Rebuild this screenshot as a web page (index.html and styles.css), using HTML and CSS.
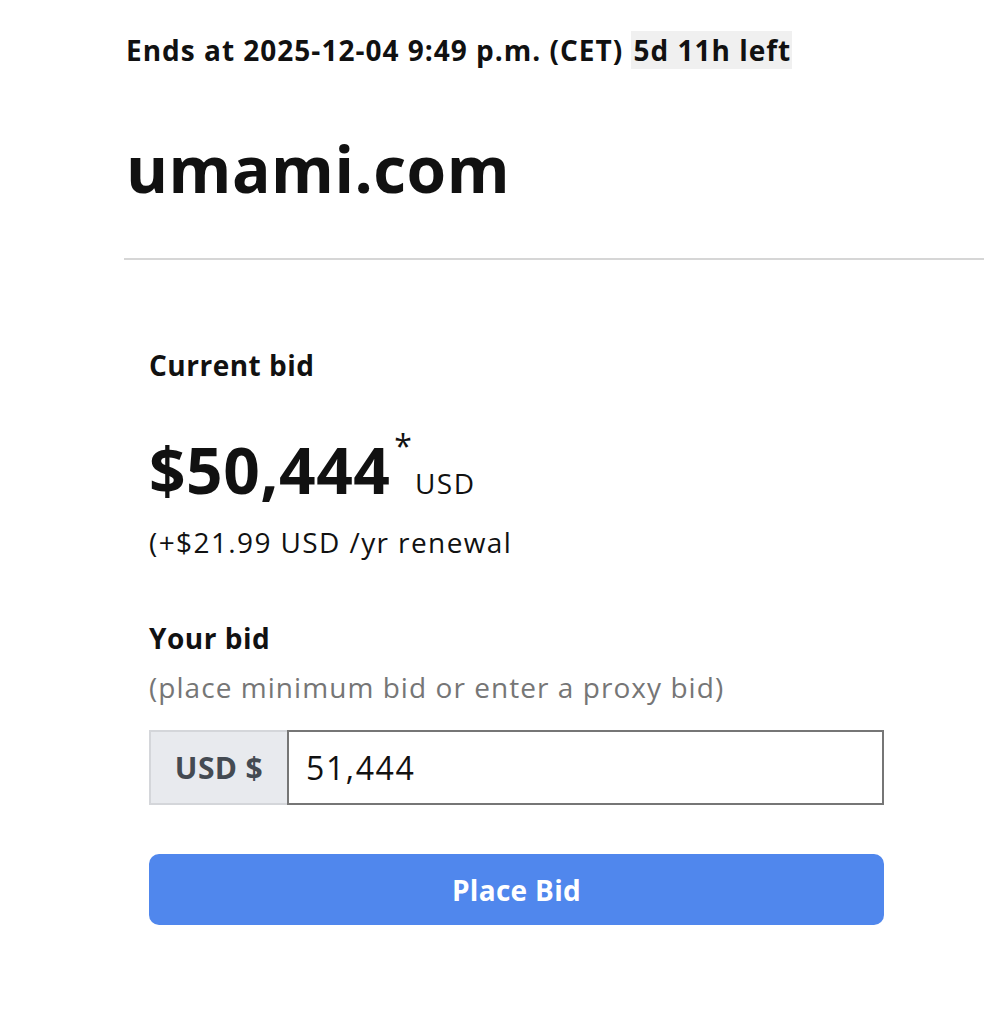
FILE: index.html
```html
<!DOCTYPE html>
<html lang="en">
<head>
<meta charset="utf-8">
<link rel="stylesheet" href="styles.css">
<title>umami.com auction</title>
</head>
<body>
<main class="page">
  <header class="head">
    <p class="ends">Ends at 2025-12-04 9:49 p.m. (CET) <span class="left">5d 11h left</span></p>
    <h1 class="domain">umami.com</h1>
  </header>
  <section class="bid-panel">
    <h2 class="label">Current bid</h2>
    <div class="price"><span class="amount">$50,444</span><sup class="star">*</sup><span class="cur">USD</span></div>
    <p class="renewal">(+$21.99 USD /yr renewal</p>
    <h2 class="label your">Your bid</h2>
    <p class="hint">(place minimum bid or enter a proxy bid)</p>
    <div class="input-group">
      <span class="prefix">USD $</span>
      <input class="bid-input" type="text" value="51,444">
    </div>
    <button class="place" type="button">Place Bid</button>
  </section>
</main>
</body>
</html>
```
FILE: styles.css
```css
* { box-sizing: border-box; }
html, body { margin: 0; padding: 0; background: #fff; }
body {
  font-family: "Open Sans", "Liberation Sans", sans-serif;
  color: #111;
}
.page { padding-left: 124px; }
.head { padding-left: 2px; }
.ends {
  margin: 0;
  padding-top: 33px;
  font-size: 28px;
  font-weight: 700;
  line-height: 34px;
  letter-spacing: 1px;
}
.left { background: #f0f0f0; padding: 0 1px 0 2px; }
.domain {
  margin: 0;
  padding-top: 64px;
  padding-bottom: 51px;
  font-size: 64px;
  font-weight: 700;
  line-height: 76px;
  letter-spacing: 0.5px;
}
.bid-panel {
  border-top: 2px solid #d6d6d6;
  padding: 88px 100px 0 25px;
}
.label {
  margin: 0;
  font-size: 28px;
  font-weight: 700;
  line-height: 34px;
  letter-spacing: 0.5px;
}
.price {
  display: flex;
  align-items: baseline;
  margin-top: 50px;
}
.amount { font-size: 64px; font-weight: 700; line-height: 76px; letter-spacing: 0.5px; }
.star { font-size: 32px; font-weight: 400; align-self: flex-start; margin: -6px 3px 0 4px; line-height: 40px; }
.cur { font-size: 28px; font-weight: 400; letter-spacing: 1.5px; }
.renewal {
  margin: 17px 0 0;
  font-size: 28px;
  line-height: 34px;
  letter-spacing: 1.4px;
}
.your { margin-top: 62px; }
.hint {
  margin: 15px 0 0;
  font-size: 28px;
  line-height: 34px;
  letter-spacing: 1.05px;
  color: #767676;
}
.input-group {
  display: flex;
  margin-top: 26px;
  height: 75px;
}
.prefix {
  display: flex;
  align-items: center;
  justify-content: center;
  width: 138px;
  background: #e8eaee;
  border: 2px solid #d4d6da;
  border-right: none;
  font-size: 30px;
  font-weight: 700;
  letter-spacing: 0.4px;
  color: #444a52;
}
.bid-input {
  flex: 1;
  border: 2px solid #767676;
  padding: 0 17px;
  font-family: inherit;
  font-size: 32px;
  letter-spacing: 1.6px;
  color: #111;
  outline: none;
}
.place {
  display: block;
  width: 100%;
  margin-top: 49px;
  height: 71px;
  border: none;
  border-radius: 10px;
  background: #5087ed;
  color: #fff;
  font-family: inherit;
  font-size: 28px;
  font-weight: 700;
  letter-spacing: 0.3px;
}
```
